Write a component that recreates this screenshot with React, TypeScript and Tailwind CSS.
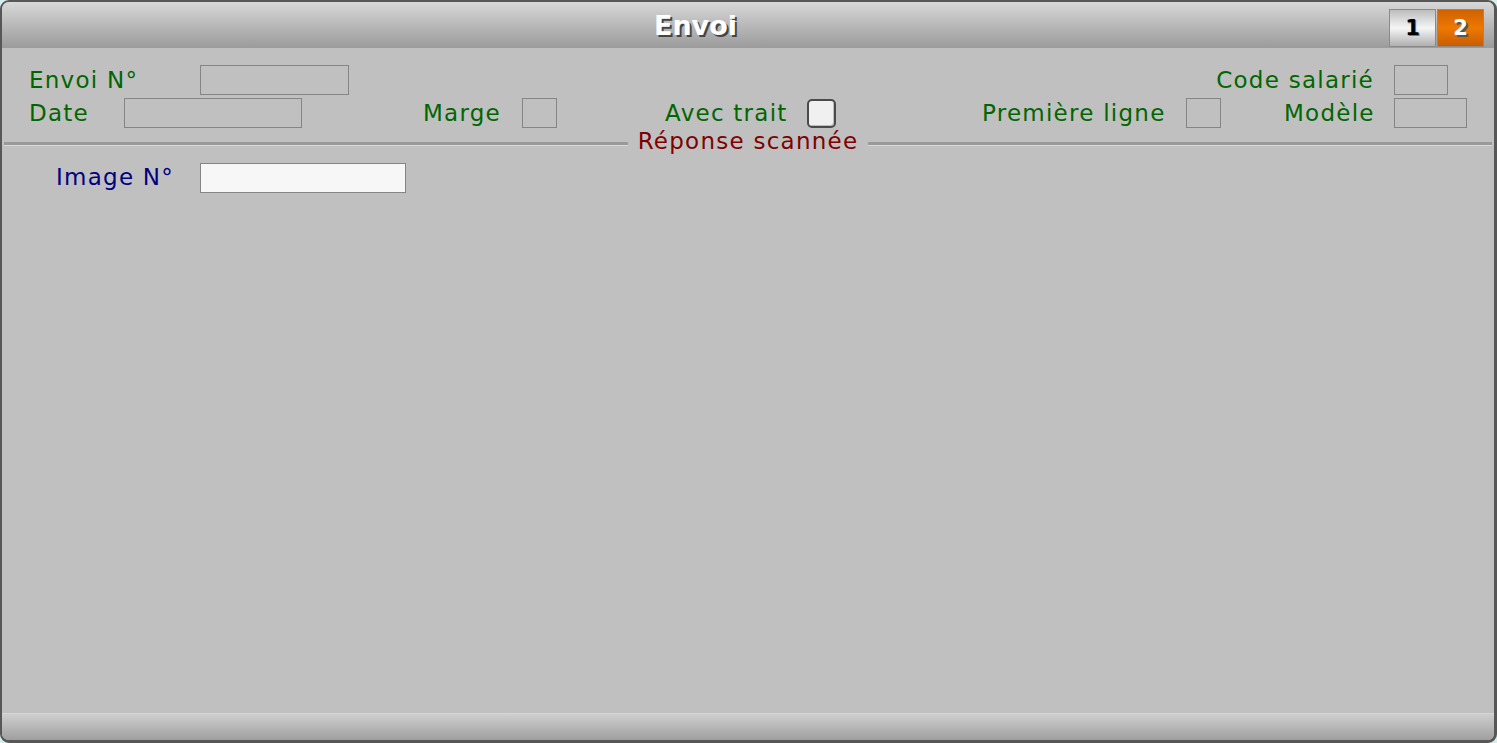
import React from "react";

const font = { fontFamily: '"DejaVu Sans", Verdana, sans-serif' };

function Box({ w, light }: { w: string; light?: boolean }) {
  return (
    <div
      className={`${w} h-[30px] border border-[#858585] ${light ? "bg-[#f7f7f7]" : "bg-transparent"} shrink-0`}
    />
  );
}

export default function App() {
  return (
    <div className="w-[1497px] h-[743px] bg-[#d4eeee]" style={font}>
      <div className="h-full flex flex-col rounded-tl-[9px] rounded-tr-[9px] rounded-bl-[9px] rounded-br-[9px] border-t-2 border-l-2 border-r-[3px] border-b-[3px] border-[#575757] bg-[#c0c0c0] overflow-hidden">
        {/* title bar */}
        <div className="h-[46px] shrink-0 flex items-start bg-gradient-to-b from-[#d8d8d8] to-[#9b9b9b]">
          <div className="flex-1 h-full flex items-center justify-center">
            <span className="text-[27px] font-bold text-white leading-none [text-shadow:2px_2px_0_#444] pt-[1px]">
              Envoi
            </span>
          </div>
          <div className="flex gap-[1px] pt-[7px] pr-[10px]">
            <div className="w-[47px] h-[38px] border border-[#8a8a8a] bg-gradient-to-b from-[#bdbdbd] via-[#f6f6f6] to-[#b0b0b0] flex items-center justify-center">
              <span className="text-[21px] font-bold text-black leading-none [text-shadow:1px_1px_0_#777]">1</span>
            </div>
            <div className="w-[47px] h-[38px] border border-[#8a8a8a] bg-gradient-to-b from-[#cf6200] via-[#ee7800] to-[#c85e00] flex items-center justify-center">
              <span className="text-[21px] font-bold text-white leading-none [text-shadow:2px_2px_0_#555]">2</span>
            </div>
          </div>
        </div>

        {/* body */}
        <div className="flex-1 flex flex-col pt-[17px] text-[23px] leading-[26px] tracking-[1.25px] whitespace-nowrap">
          {/* row 1 */}
          <div className="flex items-center pl-[27px] h-[30px]">
            <div className="w-[171px] shrink-0 text-[#006600]">Envoi N°</div>
            <Box w="w-[149px]" />
            <div className="ml-[850px] w-[195px] shrink-0 text-[#006600] text-right pr-[20px]">Code salarié</div>
            <Box w="w-[54px]" />
          </div>
          {/* row 2 */}
          <div className="flex items-center pl-[27px] h-[30px] mt-[3px]">
            <div className="w-[95px] shrink-0 text-[#006600]">Date</div>
            <Box w="w-[178px]" />
            <div className="ml-[121px] w-[99px] shrink-0 text-[#006600]">Marge</div>
            <Box w="w-[35px]" />
            <div className="ml-[108px] w-[142px] shrink-0 text-[#006600]">Avec trait</div>
            <div className="w-[29px] h-[29px] rounded-[5px] border-2 border-[#4a4a4a] bg-[#f0f0f0] shadow-[inset_-1px_-1px_0_#bdbdbd] shrink-0" />
            <div className="ml-[146px] w-[204px] shrink-0 text-[#006600]">Première ligne</div>
            <Box w="w-[35px]" />
            <div className="ml-[63px] w-[110px] shrink-0 text-[#006600]">Modèle</div>
            <Box w="w-[73px]" />
          </div>
          {/* separator */}
          <div className="flex items-start px-[2px] h-[26px]">
            <div className="flex-1 mt-[14px] border-t-[3px] border-[#9a9a9a] border-b border-b-[#dadada]" />
            <div className="px-[10px] text-[#800000]">Réponse scannée</div>
            <div className="flex-1 mt-[14px] border-t-[3px] border-[#9a9a9a] border-b border-b-[#dadada]" />
          </div>
          {/* row 3 */}
          <div className="flex items-center pl-[54px] h-[30px] mt-[9px]">
            <div className="w-[144px] shrink-0 text-[#000080] pb-[2px]">Image N°</div>
            <Box w="w-[206px]" light />
          </div>
        </div>

        {/* status bar */}
        <div className="h-[27px] shrink-0 border-t border-[#d6d6d6] bg-gradient-to-b from-[#cfcfcf] to-[#9f9f9f]" />
      </div>
    </div>
  );
}
